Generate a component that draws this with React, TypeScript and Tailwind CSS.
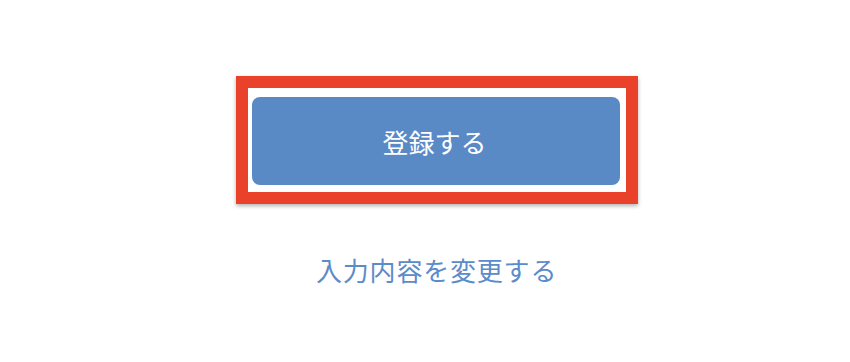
export default function App() {
    return (
        <div className="flex h-[362px] w-[850px] flex-col items-start bg-white pt-[76px] font-['Noto_Sans_CJK_JP',sans-serif]">
            {/* Highlighted submit button */}
            <div className="ml-[236px] w-[402px] border-[12px] border-[#e9412a] bg-white pb-[7px] pl-[4px] pr-[6px] pt-[9px] shadow-[0_2px_4px_rgba(0,0,0,0.3)]">
                <button className="flex h-[88px] w-[368px] items-center justify-center rounded-[8px] bg-[#5a8ac6] pr-[3px] text-[26px] text-white">
                    登録する
                </button>
            </div>

            {/* Back link */}
            <a href="#" className="ml-[316px] mt-[48px] text-[26px] leading-[36px] tracking-[0.8px] text-[#5b8bc9]">
                入力内容を変更する
            </a>
        </div>
    )
}
